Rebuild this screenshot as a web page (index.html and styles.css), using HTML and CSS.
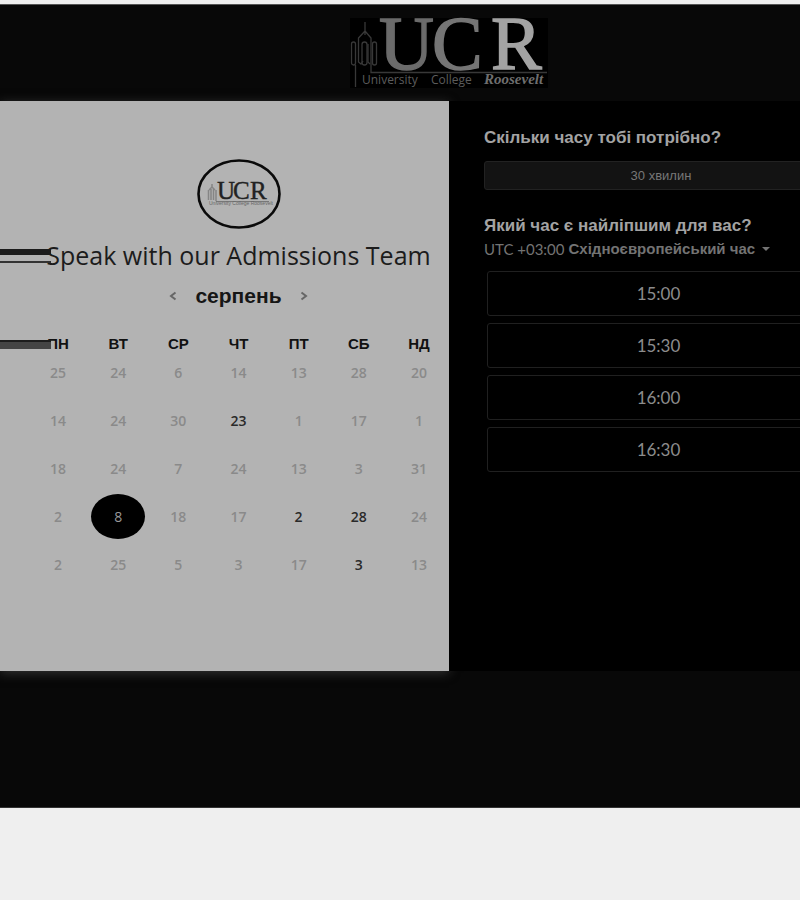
FILE: index.html
```html
<!DOCTYPE html>
<html lang="uk">
<head>
<meta charset="utf-8">
<meta name="viewport" content="width=device-width, initial-scale=1">
<title>Speak with our Admissions Team</title>
<link rel="stylesheet" href="styles.css">
</head>
<body>
<div class="stage">
  <header class="header">
    <svg class="logo" viewBox="0 0 198 70" role="img" aria-label="University College Roosevelt">
      <rect width="198" height="70" fill="#000"/>
      <g fill="none" stroke="#383838" stroke-width="1.300">
        <path d="M15 4V13M15 13L8.500 20V24M15 13L21 20V45M15 13V17"/>
        <rect x="1.500" y="24" width="4" height="23" rx="2"/>
        <path d="M8.500 24V44L11 46L13 43"/>
        <rect x="12" y="24" width="5" height="23" rx="2.500"/>
        <path d="M18 26V44L20 46"/>
        <rect x="22.500" y="24" width="4" height="23" rx="2"/>
        <path d="M5.500 47V69M21 45V54.500H197"/>
      </g>
      <g class="logo-letters">
        <text x="29" y="51" fill="#6b6b6b" stroke="#6b6b6b">U</text>
        <text x="82" y="51" fill="#757575" stroke="#757575">C</text>
        <text x="141" y="51" fill="#a3a3a3" stroke="#a3a3a3">R</text>
      </g>
      <text class="logo-sub" x="12" y="66">University</text>
      <text class="logo-sub" x="81" y="66">College</text>
      <text class="logo-name" x="134" y="66">Roosevelt</text>
    </svg>
  </header>

  <main class="booking">
    <section class="calendar">
      <svg class="badge" viewBox="0 0 84 70" role="img" aria-label="UCR">
        <ellipse cx="42" cy="35" rx="40.500" ry="33.500" fill="none" stroke="#0a0a0a" stroke-width="2.600"/>
        <path d="M15 25V29M12 31L15 28L18 31M11.500 31V41M14 30V41M16.500 30V41M19 31V42" fill="none" stroke="#858585" stroke-width="1.500"/>
        <path d="M19 42.500H72" stroke="#777" stroke-width="1"/>
        <g class="badge-letters">
          <text x="20" y="40">U</text>
          <text x="36" y="40">C</text>
          <text x="53" y="40">R</text>
        </g>
        <text class="badge-sub" x="12" y="46">University College Roosevelt</text>
      </svg>
      <h1 class="title">Speak with our Admissions Team</h1>
      <div class="month">
        <button class="arrow" type="button" aria-label="Попередній місяць"><svg viewBox="0 0 8 10"><path d="M6.500 1.500L2 5L6.500 8.500"/></svg></button>
        <h2 class="month-name">серпень</h2>
        <button class="arrow" type="button" aria-label="Наступний місяць"><svg viewBox="0 0 8 10"><path d="M1.500 1.500L6 5L1.500 8.500"/></svg></button>
      </div>
      <div class="days">
        <table>
          <thead><tr><th>ПН</th><th>ВТ</th><th>СР</th><th>ЧТ</th><th>ПТ</th><th>СБ</th><th>НД</th></tr></thead>
          <tbody>
            <tr><td>25</td><td>24</td><td>6</td><td>14</td><td>13</td><td>28</td><td>20</td></tr>
            <tr><td>14</td><td>24</td><td>30</td><td><button class="day" type="button">23</button></td><td>1</td><td>17</td><td>1</td></tr>
            <tr><td>18</td><td>24</td><td>7</td><td>24</td><td>13</td><td>3</td><td>31</td></tr>
            <tr><td>2</td><td><button class="day selected" type="button" aria-pressed="true">8</button></td><td>18</td><td>17</td><td><button class="day" type="button">2</button></td><td><button class="day" type="button">28</button></td><td>24</td></tr>
            <tr><td>2</td><td>25</td><td>5</td><td>3</td><td>17</td><td><button class="day" type="button">3</button></td><td>13</td></tr>
          </tbody>
        </table>
      </div>
    </section>

    <section class="options">
      <h2 class="question">Скільки часу тобі потрібно?</h2>
      <button class="duration" type="button">30 хвилин</button>
      <h2 class="question">Який час є найліпшим для вас?</h2>
      <button class="zone" type="button"><span>UTC +03:00</span> <b>Східноєвропейський час</b><svg viewBox="0 0 8 4"><path d="M0 0H8L4 4Z"/></svg></button>
      <div class="slots">
        <button class="slot" type="button">15:00</button>
        <button class="slot" type="button">15:30</button>
        <button class="slot" type="button">16:00</button>
        <button class="slot" type="button">16:30</button>
      </div>
    </section>
  </main>
</div>
</body>
</html>
```
FILE: styles.css
```css
*,
*::before {
  box-sizing: border-box;
}

body {
  margin: 0;
  padding-top: 4px;
  overflow-x: hidden;
  background: #efefef;
  font-family: "Liberation Sans", sans-serif;
}

button {
  margin: 0;
  padding: 0;
  border: 0;
  background: none;
  color: inherit;
  font: inherit;
}

h1,
h2 {
  margin: 0;
}

/* The booking stage is wider than the window and runs off its right edge. */
.stage {
  width: calc(100% + 98px);
  padding-bottom: 136px;
  border-top: 1px solid #555;
  border-bottom: 1px solid #333;
  background: #080808;
}

.header {
  display: flex;
  justify-content: center;
  padding: 13px 0;
}

.logo {
  display: block;
  width: 198px;
  height: 70px;
  overflow: visible;
}

.logo-letters {
  font-family: "Liberation Serif", serif;
  font-size: 76px;
  stroke-width: 1.5;
}

.logo-sub {
  font-family: "Open Sans", sans-serif;
  font-size: 12px;
  fill: #5c5c5c;
}

.logo-name {
  font-family: "Liberation Serif", serif;
  font-size: 15px;
  font-style: italic;
  font-weight: bold;
  fill: #6e6e6e;
}

.booking {
  display: grid;
  grid-template-columns: 1fr 1fr;
  min-height: 570px;
}

.calendar {
  display: flex;
  flex-direction: column;
  align-items: center;
  padding: 58px 0 0 28px;
  background: #b3b3b3;
  box-shadow: 0 2px 10px #333;
}

.badge {
  width: 84px;
  height: 70px;
}

.badge-letters {
  font-family: "Liberation Serif", serif;
  font-size: 25px;
  fill: #222;
  stroke: #222;
  stroke-width: 0.4;
}

.badge-sub {
  font-family: "Liberation Sans", sans-serif;
  font-size: 5px;
  fill: #666;
}

.title,
.days {
  position: relative;
  align-self: stretch;
}

.title {
  margin-top: 10px;
  color: #1c1c1c;
  font-family: "Open Sans", sans-serif;
  font-size: 25px;
  font-weight: 400;
  line-height: 32px;
  text-align: center;
}

/* Dark bars that run in from the left edge. */
.title::before,
.days::before {
  content: "";
  position: absolute;
  left: -28px;
  width: 51px;
}

.title::before {
  top: 10px;
  height: 14px;
  border-top: 6px solid #1c1c1c;
  border-bottom: 2px solid #333;
}

.days::before {
  top: 0;
  height: 9px;
  border-top: 2px solid #1c1c1c;
  background: #444;
}

.month {
  display: flex;
  align-items: center;
  gap: 18px;
  margin-top: 13px;
}

.month-name {
  color: #161616;
  font-size: 21px;
  line-height: 24px;
}

.arrow svg {
  display: block;
  width: 8px;
  height: 10px;
  fill: none;
  stroke: #666;
  stroke-width: 2;
}

.days {
  margin-top: 32px;
}

table {
  width: 100%;
  table-layout: fixed;
  border-collapse: collapse;
}

th,
td {
  padding: 0;
  text-align: center;
}

th {
  height: 8px;
  color: #111;
  font-size: 15px;
  line-height: 8px;
}

td {
  height: 48px;
  color: #8a8a8a;
  font-family: "Open Sans", sans-serif;
  font-size: 14px;
  font-weight: 600;
}

.day {
  width: 54px;
  height: 45px;
  border-radius: 50%;
  color: #2a2a2a;
}

.day.selected {
  background: #000;
  color: #999;
  font-weight: 400;
}

.options {
  display: flex;
  flex-direction: column;
  align-items: flex-start;
  padding: 26px 60px 0 35px;
  background: #000;
}

.question {
  color: #a3a3a3;
  font-size: 17px;
  line-height: 22px;
}

.duration {
  align-self: stretch;
  height: 29px;
  margin: 12px 0 25px;
  border: 1px solid #222;
  border-radius: 3px;
  background: #131313;
  color: #777;
  font-size: 13px;
}

.zone {
  display: flex;
  align-items: center;
  gap: 4px;
  color: #737373;
  font-size: 15px;
  line-height: 24px;
}

.zone span {
  font-family: Lato, sans-serif;
}

.zone svg {
  width: 8px;
  height: 4px;
  margin-left: 3px;
  fill: #737373;
}

.slots {
  display: grid;
  align-self: stretch;
  gap: 7px;
  margin: 10px 8px 0 3px;
}

.slot {
  height: 45px;
  border: 1px solid #202020;
  border-radius: 3px;
  color: #8c8c8c;
  font-family: Lato, sans-serif;
  font-size: 17px;
}
```
